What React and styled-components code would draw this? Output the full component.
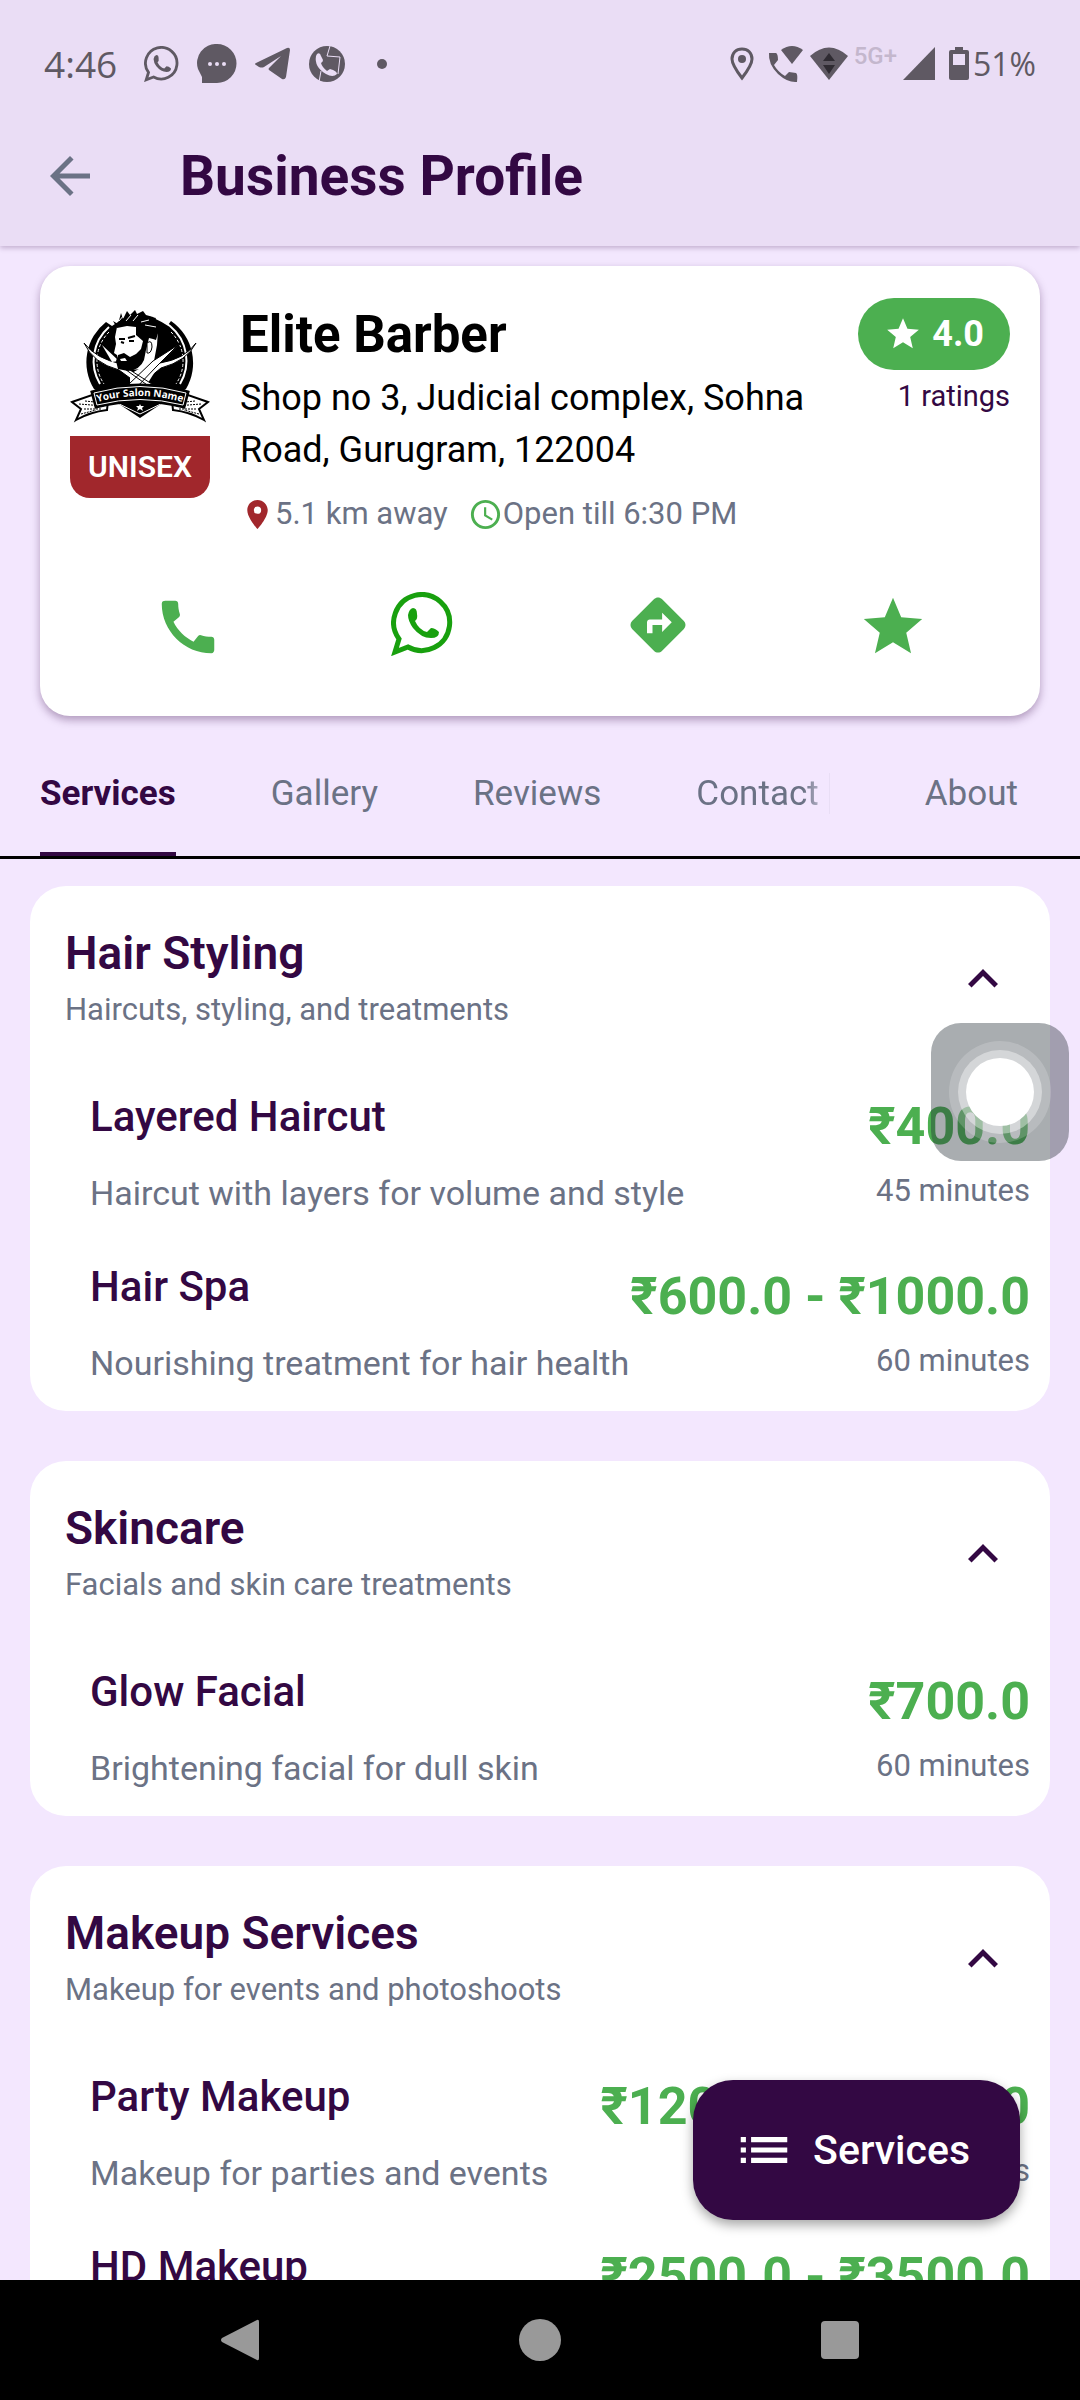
import React, { useState } from 'react';
import styled, { createGlobalStyle } from 'styled-components';
import {
  MdArrowBack,
  MdCall,
  MdDirections,
  MdKeyboardArrowUp,
  MdList,
  MdLocationOn,
  MdOutlineAccessTime,
  MdStar,
} from 'react-icons/md';

const COLORS = {
  BG: '#f3e7fe',
  HEADER: '#eaddf5',
  PURPLE: '#330843',
  GREEN: '#4caf50',
  WHATSAPP: '#18a00e',
  RED: '#a1272c',
  GRAY: '#6b7285',
  STATUS: '#5f5963',
  WHITE: '#ffffff',
};

const TABS = [
  { name: 'Services' },
  { name: 'Gallery' },
  { name: 'Reviews' },
  { name: 'Contact', faded: true },
  { name: 'About' },
];

const CATEGORIES = [
  {
    title: 'Hair Styling',
    info: 'Haircuts, styling, and treatments',
    items: [
      { name: 'Layered Haircut', desc: 'Haircut with layers for volume and style', price: '₹400.0', time: '45 minutes' },
      { name: 'Hair Spa', desc: 'Nourishing treatment for hair health', price: '₹600.0 - ₹1000.0', time: '60 minutes' },
    ],
  },
  {
    title: 'Skincare',
    info: 'Facials and skin care treatments',
    items: [
      { name: 'Glow Facial', desc: 'Brightening facial for dull skin', price: '₹700.0', time: '60 minutes' },
    ],
  },
  {
    title: 'Makeup Services',
    info: 'Makeup for events and photoshoots',
    items: [
      { name: 'Party Makeup', desc: 'Makeup for parties and events', price: '₹1200.0 - ₹1500.0', time: '90 minutes' },
      { name: 'HD Makeup', desc: 'High definition makeup', price: '₹2500.0 - ₹3500.0', time: '120 minutes' },
    ],
  },
];

const SalonLogo = () => (
  <svg width="140" height="120" viewBox="0 0 140 120" role="img" aria-label="Salon logo">
    <path d="M36 12A51 51 0 0 0 24 79L52 96L70 108L88 96L116 79A51 51 0 0 0 101 11L98 15L86 8Q70 3 54 8L42 16Z" fill="#000" />
    <path d="M39 17A45 45 0 0 0 30 74M86 8Q93 11 100 16A45 45 0 0 1 110 74" fill="none" stroke="#fff" strokeWidth="2" />
    <path d="M39 22A41 41 0 0 0 34 74M101 22A41 41 0 0 1 106 74" fill="none" stroke="#fff" strokeWidth="1" strokeDasharray="3 2" />
    <path d="M45 92L70 104L95 92" fill="none" stroke="#fff" strokeWidth="1" />
    <path d="M14 33Q26 49 52 54L80 75L75 79L49 60Q23 53 14 33ZM126 33Q117 51 91 58L64 80L59 76L84 52L110 34L90 53Q115 49 126 33Z" fill="#fff" stroke="#000" strokeWidth="1" />
    <path d="M32 35L49 51L42 52Z" fill="#fff" />
    <path d="M60 64L85 50L86 60L76 76H60Z" fill="#fff" />
    <path d="M47 17L61 12L79 14L88 20L87 35L84 51L75 59L57 60L47 54L47 45L44 43L46 34L45 27Z" fill="#fff" />
    <path d="M58 75L83 51L108 35L86 57L66 78ZM80 77L52 57L60 60L85 76Z" fill="#fff" stroke="#000" strokeWidth="1" />
    <path d="M43 11L48 14L51 3L53 9L57 1L60 5L65 0L67 4L73 1L76 5L83 7L88 13L89 20L86 30L83 29L79 28L76 40L74 50Q70 60 58 61L48 59L46 51L48 45L54 43L60 47L66 44L71 39L73 31L66 25L66 17L57 16L47 18Z" fill="#000" />
    <path d="M49 11L54 5M56 11L61 5M63 11L68 5M71 12L79 10M75 15L86 17" stroke="#fff" strokeWidth="1" />
    <path d="M49 29L55 29M58 28L65 26M51 32L54 33M59 31L64 31" stroke="#000" strokeWidth="2" />
    <path d="M50 49L55 48L57 51L51 51Z" fill="#fff" />
    <path d="M77 33Q82 29 82 37Q81 44 77 43Z" fill="#fff" stroke="#000" strokeWidth="1" />
    <path d="M2 92L22 85L38 91L37 100Q20 102 6 110L11 99ZM138 92L118 85L102 91L103 100Q120 102 134 110L129 99Z" fill="#fff" stroke="#000" strokeWidth="2" />
    <path d="M9 94L34 96M15 91L34 93M14 99L32 99M11 104L26 100M131 94L106 96M125 91L106 93M126 99L108 99M129 104L114 100" stroke="#000" strokeWidth="1" strokeDasharray="2 1" />
    <path d="M22 82Q70 68 118 82L114 97Q70 86 26 97Z" fill="#000" stroke="#000" strokeWidth="3" />
    <path d="M24 83Q70 70 116 83L113 95Q70 84 27 95Z" fill="#000" stroke="#fff" strokeWidth="1" />
    <path id="ribbon" d="M28 92Q70 80 112 92" fill="none" />
    <text fill="#fff" fontFamily="'Open Sans', sans-serif" fontSize="10" fontWeight="700" textAnchor="middle">
      <textPath href="#ribbon" startOffset="50%">Your Salon Name</textPath>
    </text>
    <path d="M70 94L71 96L74 96L72 98L73 101L70 99L67 101L68 98L66 96L69 96Z" fill="#fff" />
  </svg>
);

const WhatsAppIcon = ({ size, color = 'currentColor' }) => (
  <svg width={size} height={size} viewBox="0 0 64 64">
    <path d="M4 60L8 47A28 28 0 1 1 17 55Z" fill="none" stroke={color} strokeWidth="5" />
    <path d="M22 16Q26 16 26 22Q27 27 24 29Q28 38 36 40L40 36Q44 36 48 40Q48 46 40 46Q30 46 22 36Q17 29 17 23Q18 17 22 16Z" fill={color} />
  </svg>
);

const ChatIcon = () => (
  <svg width="40" height="40" viewBox="0 0 40 40" fill="currentColor">
    <path d="M20 0A19 19 0 0 1 20 39H5V33L1 25A19 19 0 0 1 20 0Z" />
    <g fill="#eaddf5">
      <circle cx="13" cy="20" r="2" />
      <circle cx="20" cy="20" r="2" />
      <circle cx="27" cy="20" r="2" />
    </g>
  </svg>
);

const PlaneIcon = () => (
  <svg width="36" height="36" viewBox="0 0 36 36" fill="currentColor">
    <path d="M2 17L33 2Q36 1 36 4L32 31Q31 34 28 33L15 24Q14 23 15 22L27 10L10 21Q8 22 5 21L2 19Q0 18 2 17Z" />
  </svg>
);

const CallAppIcon = () => (
  <svg width="36" height="36" viewBox="0 0 36 36">
    <circle cx="18" cy="18" r="18" fill="currentColor" />
    <path d="M21 0L18 10L31 11L29 28M12 25L10 36" fill="none" stroke="#eaddf5" strokeWidth="1" />
    <path d="M8 8Q11 6 12 10L14 14Q14 16 12 17Q13 21 18 25L21 23Q28 25 28 28Q24 32 17 28Q5 21 7 10Z" fill="#eaddf5" />
  </svg>
);

const PinIcon = () => (
  <svg width="24" height="34" viewBox="0 0 24 34">
    <path d="M12 2C6 2 2 6 2 12C2 18 12 31 12 31C12 31 22 18 22 12C22 6 18 2 12 2Z" fill="none" stroke="currentColor" strokeWidth="3" />
    <circle cx="12" cy="12" r="4" fill="currentColor" />
  </svg>
);

const WifiCallIcon = () => (
  <svg width="36" height="38" viewBox="0 0 36 38" fill="currentColor">
    <path d="M1 8H8Q10 9 10 15L6 20Q10 27 17 31L21 27L28 28Q30 29 29 37Q20 38 10 29Q0 19 1 8Z" />
    <path d="M13 5Q24 -3 35 5L24 19Z" />
  </svg>
);

const WifiIcon = () => (
  <svg width="38" height="34" viewBox="0 0 38 34">
    <path d="M0 9Q19 -8 38 9L19 33Z" fill="currentColor" />
    <path d="M13 14L19 6L25 14ZM13 18H25L19 27Z" fill="#2f2b32" />
  </svg>
);

const SignalIcon = () => (
  <svg width="32" height="34" viewBox="0 0 32 34">
    <path d="M32 0V33H0Z" fill="currentColor" />
  </svg>
);

const BatteryIcon = () => (
  <svg width="20" height="34" viewBox="0 0 20 34">
    <path d="M6 0H14V3H18Q20 3 20 5V31Q20 33 18 33H2Q0 33 0 31V5Q0 3 2 3H6Z" fill="currentColor" />
    <path d="M4 7H16V18H4Z" fill="#eaddf5" />
  </svg>
);

const ServiceCard = ({ category }) => {
  const [open, setOpen] = useState(true);

  return (
    <Card>
      <CardHeader onClick={() => setOpen(!open)} aria-expanded={open}>
        <CardTexts>
          <CardTitle>{category.title}</CardTitle>
          <CardInfo>{category.info}</CardInfo>
        </CardTexts>
        <Chevron $open={open} />
      </CardHeader>
      {open && category.items.map((item) => (
        <ServiceRow key={item.name}>
          <ServiceTexts>
            <ServiceName>{item.name}</ServiceName>
            <ServiceDesc>{item.desc}</ServiceDesc>
          </ServiceTexts>
          <PriceTexts>
            <Price>{item.price}</Price>
            <Duration>{item.time}</Duration>
          </PriceTexts>
        </ServiceRow>
      ))}
    </Card>
  );
};

const App = () => {
  const [tab, setTab] = useState('Services');

  return (
    <Screen>
      <GlobalStyle />
      <Header>
        <StatusBar>
          <StatusLeft>
            <StatusText $size={37}>4:46</StatusText>
            <AppIcons>
              <WhatsAppIcon size={36} />
              <ChatIcon />
              <PlaneIcon />
              <CallAppIcon />
              <Dot />
            </AppIcons>
          </StatusLeft>
          <StatusRight>
            <PinIcon />
            <Signals>
              <WifiCallIcon />
              <WifiIcon />
              <Network>5G+</Network>
              <SignalIcon />
            </Signals>
            <Battery>
              <BatteryIcon />
              <StatusText $size={32}>51%</StatusText>
            </Battery>
          </StatusRight>
        </StatusBar>
        <TitleBar>
          <IconButton aria-label="Back">
            <MdArrowBack size={60} color={COLORS.GRAY} />
          </IconButton>
          <Title>Business Profile</Title>
        </TitleBar>
      </Header>

      <Content>
        <ProfileCard>
          <ProfileTop>
            <LogoColumn>
              <SalonLogo />
              <Badge>UNISEX</Badge>
            </LogoColumn>
            <ProfileTexts>
              <ShopName>Elite Barber</ShopName>
              <Address>Shop no 3, Judicial complex, Sohna Road, Gurugram, 122004</Address>
              <MetaRow>
                <Meta>
                  <MdLocationOn size={35} color={COLORS.RED} />
                  5.1 km away
                </Meta>
                <Meta>
                  <MdOutlineAccessTime size={35} color={COLORS.GREEN} />
                  Open till 6:30 PM
                </Meta>
              </MetaRow>
            </ProfileTexts>
            <RatingColumn>
              <Rating>
                <MdStar size={38} />
                4.0
              </Rating>
              <RatingCount>1 ratings</RatingCount>
            </RatingColumn>
          </ProfileTop>
          <Actions>
            <IconButton aria-label="Call"><MdCall size={70} color={COLORS.GREEN} /></IconButton>
            <IconButton aria-label="WhatsApp"><WhatsAppIcon size={64} color={COLORS.WHATSAPP} /></IconButton>
            <IconButton aria-label="Directions"><MdDirections size={66} color={COLORS.GREEN} /></IconButton>
            <IconButton aria-label="Favourite"><MdStar size={70} color={COLORS.GREEN} /></IconButton>
          </Actions>
        </ProfileCard>

        <Tabs>
          {TABS.map(({ name, faded }) => (
            <Tab key={name} $active={name === tab} onClick={() => setTab(name)}>
              {faded ? <FadedLabel>{name}</FadedLabel> : name}
            </Tab>
          ))}
        </Tabs>

        <ServiceList>
          {CATEGORIES.map((category) => (
            <ServiceCard key={category.title} category={category} />
          ))}
        </ServiceList>

        <FloatingButton>
          <MdList size={62} />
          Services
        </FloatingButton>
      </Content>

      <AssistiveTouch aria-label="Assistive touch">
        <svg width="104" height="104" viewBox="0 0 104 104">
          <circle cx="52" cy="52" r="51" fill="#fff" fillOpacity="0.18" />
          <circle cx="52" cy="52" r="42" fill="#fff" fillOpacity="0.4" />
          <circle cx="52" cy="52" r="34" fill="#fff" />
        </svg>
      </AssistiveTouch>

      <NavBar>
        <IconButton aria-label="Back">
          <svg width="40" height="44" viewBox="0 0 40 44"><path d="M37 2Q39 1 39 4V40Q39 43 37 42L2 24Q0 22 2 20Z" fill="#999" /></svg>
        </IconButton>
        <IconButton aria-label="Home">
          <svg width="44" height="44" viewBox="0 0 44 44"><circle cx="22" cy="22" r="21" fill="#999" /></svg>
        </IconButton>
        <IconButton aria-label="Recent apps">
          <svg width="38" height="38" viewBox="0 0 38 38"><rect width="38" height="38" rx="4" fill="#999" /></svg>
        </IconButton>
      </NavBar>
    </Screen>
  );
};

export default App;

const GlobalStyle = createGlobalStyle`
  * {
    box-sizing: border-box;
  }

  body {
    margin: 0;
    font-family: Roboto, sans-serif;
    background-color: ${COLORS.BG};
  }

  h1, h2, h3, p {
    margin: 0;
  }

  button {
    padding: 0;
    border: none;
    background: none;
    font-family: inherit;
    color: inherit;
    cursor: pointer;
  }

  svg {
    display: block;
    flex-shrink: 0;
  }
`;

const Screen = styled.div`
  position: relative;
  display: flex;
  flex-direction: column;
  height: 100vh;
  overflow: hidden;
`;

const Header = styled.header`
  position: relative;
  z-index: 1;
  background-color: ${COLORS.HEADER};
  box-shadow: 0 2px 5px rgba(51, 8, 67, 0.25);
`;

const StatusBar = styled.div`
  display: flex;
  justify-content: space-between;
  align-items: center;
  padding: 40px 44px 0;
  height: 88px;
  color: ${COLORS.STATUS};
`;

const StatusLeft = styled.div`
  display: flex;
  align-items: center;
  gap: 17px;
`;

const AppIcons = styled.div`
  display: grid;
  grid-template-columns: repeat(5, 55px);
  align-items: center;
  justify-items: center;
`;

const StatusRight = styled.div`
  display: flex;
  align-items: center;
  gap: 14px;
`;

const Signals = styled.div`
  display: flex;
  align-items: center;
  gap: 6px;
`;

const Battery = styled.div`
  display: flex;
  align-items: center;
  gap: 4px;
`;

const StatusText = styled.span`
  font-family: 'Open Sans', sans-serif;
  font-size: ${(props) => props.$size}px;
  line-height: 48px;
`;

const Network = styled.span`
  align-self: flex-start;
  font-size: 24px;
  font-weight: 500;
  line-height: 22px;
  color: #c4b7cd;
`;

const Dot = styled.span`
  width: 10px;
  height: 10px;
  border-radius: 50%;
  background-color: currentColor;
`;

const TitleBar = styled.div`
  display: flex;
  align-items: center;
  gap: 80px;
  height: 158px;
  padding: 18px 40px 0;
`;

const Title = styled.h1`
  font-size: 55px;
  font-weight: 700;
  line-height: 70px;
  color: ${COLORS.PURPLE};
`;

const IconButton = styled.button`
  display: flex;
  align-items: center;
  justify-content: center;
`;

const Content = styled.main`
  position: relative;
  display: flex;
  flex-direction: column;
  flex: 1;
  min-height: 0;
  overflow: hidden;
`;

const ProfileCard = styled.section`
  flex-shrink: 0;
  margin: 20px 40px 0;
  padding: 32px 30px 54px;
  border-radius: 30px;
  background-color: ${COLORS.WHITE};
  box-shadow: 0 4px 8px rgba(51, 8, 67, 0.35);
`;

const ProfileTop = styled.div`
  display: flex;
  align-items: flex-start;
`;

const LogoColumn = styled.div`
  display: flex;
  flex-direction: column;
  gap: 6px;
  padding-top: 12px;
`;

const Badge = styled.span`
  width: 140px;
  border-radius: 0 0 20px 20px;
  background-color: ${COLORS.RED};
  color: ${COLORS.WHITE};
  font-size: 30px;
  font-weight: 600;
  line-height: 62px;
  text-align: center;
`;

const ProfileTexts = styled.div`
  flex: 1;
  padding-left: 30px;
`;

const ShopName = styled.h2`
  font-size: 51px;
  font-weight: 700;
  line-height: 74px;
`;

const Address = styled.p`
  font-size: 36px;
  line-height: 52px;
`;

const MetaRow = styled.div`
  display: flex;
  gap: 20px;
  margin-top: 20px;
`;

const Meta = styled.span`
  display: flex;
  align-items: center;
  font-size: 31px;
  line-height: 36px;
  color: ${COLORS.GRAY};
`;

const RatingColumn = styled.div`
  display: flex;
  flex-direction: column;
  align-items: flex-end;
  gap: 8px;
`;

const Rating = styled.span`
  display: flex;
  align-items: center;
  gap: 10px;
  height: 72px;
  padding: 0 26px;
  border-radius: 36px;
  background-color: ${COLORS.GREEN};
  color: ${COLORS.WHITE};
  font-size: 36px;
  font-weight: 700;
`;

const RatingCount = styled.span`
  font-size: 29px;
  line-height: 36px;
  color: ${COLORS.PURPLE};
`;

const Actions = styled.div`
  display: grid;
  grid-template-columns: repeat(4, 1fr);
  align-items: start;
  margin-top: 60px;
`;

const Tabs = styled.nav`
  display: flex;
  flex-shrink: 0;
  justify-content: space-between;
  height: 143px;
  padding: 0 62px 0 40px;
  border-bottom: 3px solid #000;
`;

const Tab = styled.button`
  padding-top: 18px;
  border-bottom: 4px solid ${(props) => (props.$active ? COLORS.PURPLE : 'transparent')};
  font-size: 35px;
  font-weight: ${(props) => (props.$active ? 700 : 400)};
  color: ${(props) => (props.$active ? COLORS.PURPLE : COLORS.GRAY)};
`;

const FadedLabel = styled.span`
  display: block;
  padding-right: 10px;
  border-right: 1px solid #b9aec8;
  mask-image: linear-gradient(to right, #000 80%, rgba(0, 0, 0, 0.15) 100%);
`;

const ServiceList = styled.div`
  display: flex;
  flex-direction: column;
  flex-shrink: 0;
  gap: 50px;
  padding: 27px 30px 0;
`;

const Card = styled.section`
  border-radius: 36px;
  background-color: ${COLORS.WHITE};
`;

const CardHeader = styled.button`
  display: flex;
  align-items: center;
  justify-content: space-between;
  width: 100%;
  height: 185px;
  padding: 0 37px 0 35px;
  text-align: left;
`;

const CardTexts = styled.span`
  display: flex;
  flex-direction: column;
  gap: 12px;
  padding-bottom: 4px;
`;

const CardTitle = styled.span`
  font-size: 46px;
  font-weight: 600;
  line-height: 54px;
  color: ${COLORS.PURPLE};
`;

const CardInfo = styled.span`
  font-size: 31px;
  line-height: 36px;
  color: ${COLORS.GRAY};
`;

const Chevron = styled(MdKeyboardArrowUp).attrs({ size: 60, color: COLORS.PURPLE })`
  transform: rotate(${(props) => (props.$open ? '0deg' : '180deg')});
`;

const ServiceRow = styled.div`
  display: flex;
  justify-content: space-between;
  height: 170px;
  padding: 20px 20px 0 60px;
`;

const ServiceTexts = styled.div`
  display: flex;
  flex-direction: column;
  gap: 28px;
`;

const ServiceName = styled.h3`
  font-size: 42px;
  font-weight: 500;
  line-height: 52px;
  color: ${COLORS.PURPLE};
`;

const ServiceDesc = styled.p`
  font-size: 34px;
  line-height: 44px;
  color: ${COLORS.GRAY};
`;

const PriceTexts = styled.div`
  display: flex;
  flex-direction: column;
  align-items: flex-end;
  gap: 16px;
  padding-top: 6px;
`;

const Price = styled.span`
  font-size: 52px;
  font-weight: 700;
  line-height: 60px;
  color: ${COLORS.GREEN};
`;

const Duration = styled.span`
  font-size: 31px;
  line-height: 36px;
  color: ${COLORS.GRAY};
`;

const FloatingButton = styled.button`
  position: absolute;
  right: 60px;
  bottom: 60px;
  display: flex;
  align-items: center;
  gap: 18px;
  height: 140px;
  padding: 0 50px 0 40px;
  border-radius: 40px;
  background-color: ${COLORS.PURPLE};
  box-shadow: 0 5px 12px rgba(0, 0, 0, 0.35);
  color: ${COLORS.WHITE};
  font-size: 41px;
  font-weight: 500;
`;

const AssistiveTouch = styled.button`
  position: absolute;
  top: 1023px;
  right: 11px;
  display: flex;
  align-items: center;
  justify-content: center;
  width: 138px;
  height: 138px;
  border-radius: 30px;
  background-color: rgba(41, 50, 58, 0.4);
`;

const NavBar = styled.footer`
  display: grid;
  grid-template-columns: repeat(3, 1fr);
  flex-shrink: 0;
  align-items: center;
  height: 120px;
  padding: 0 90px;
  background-color: #000;
`;
